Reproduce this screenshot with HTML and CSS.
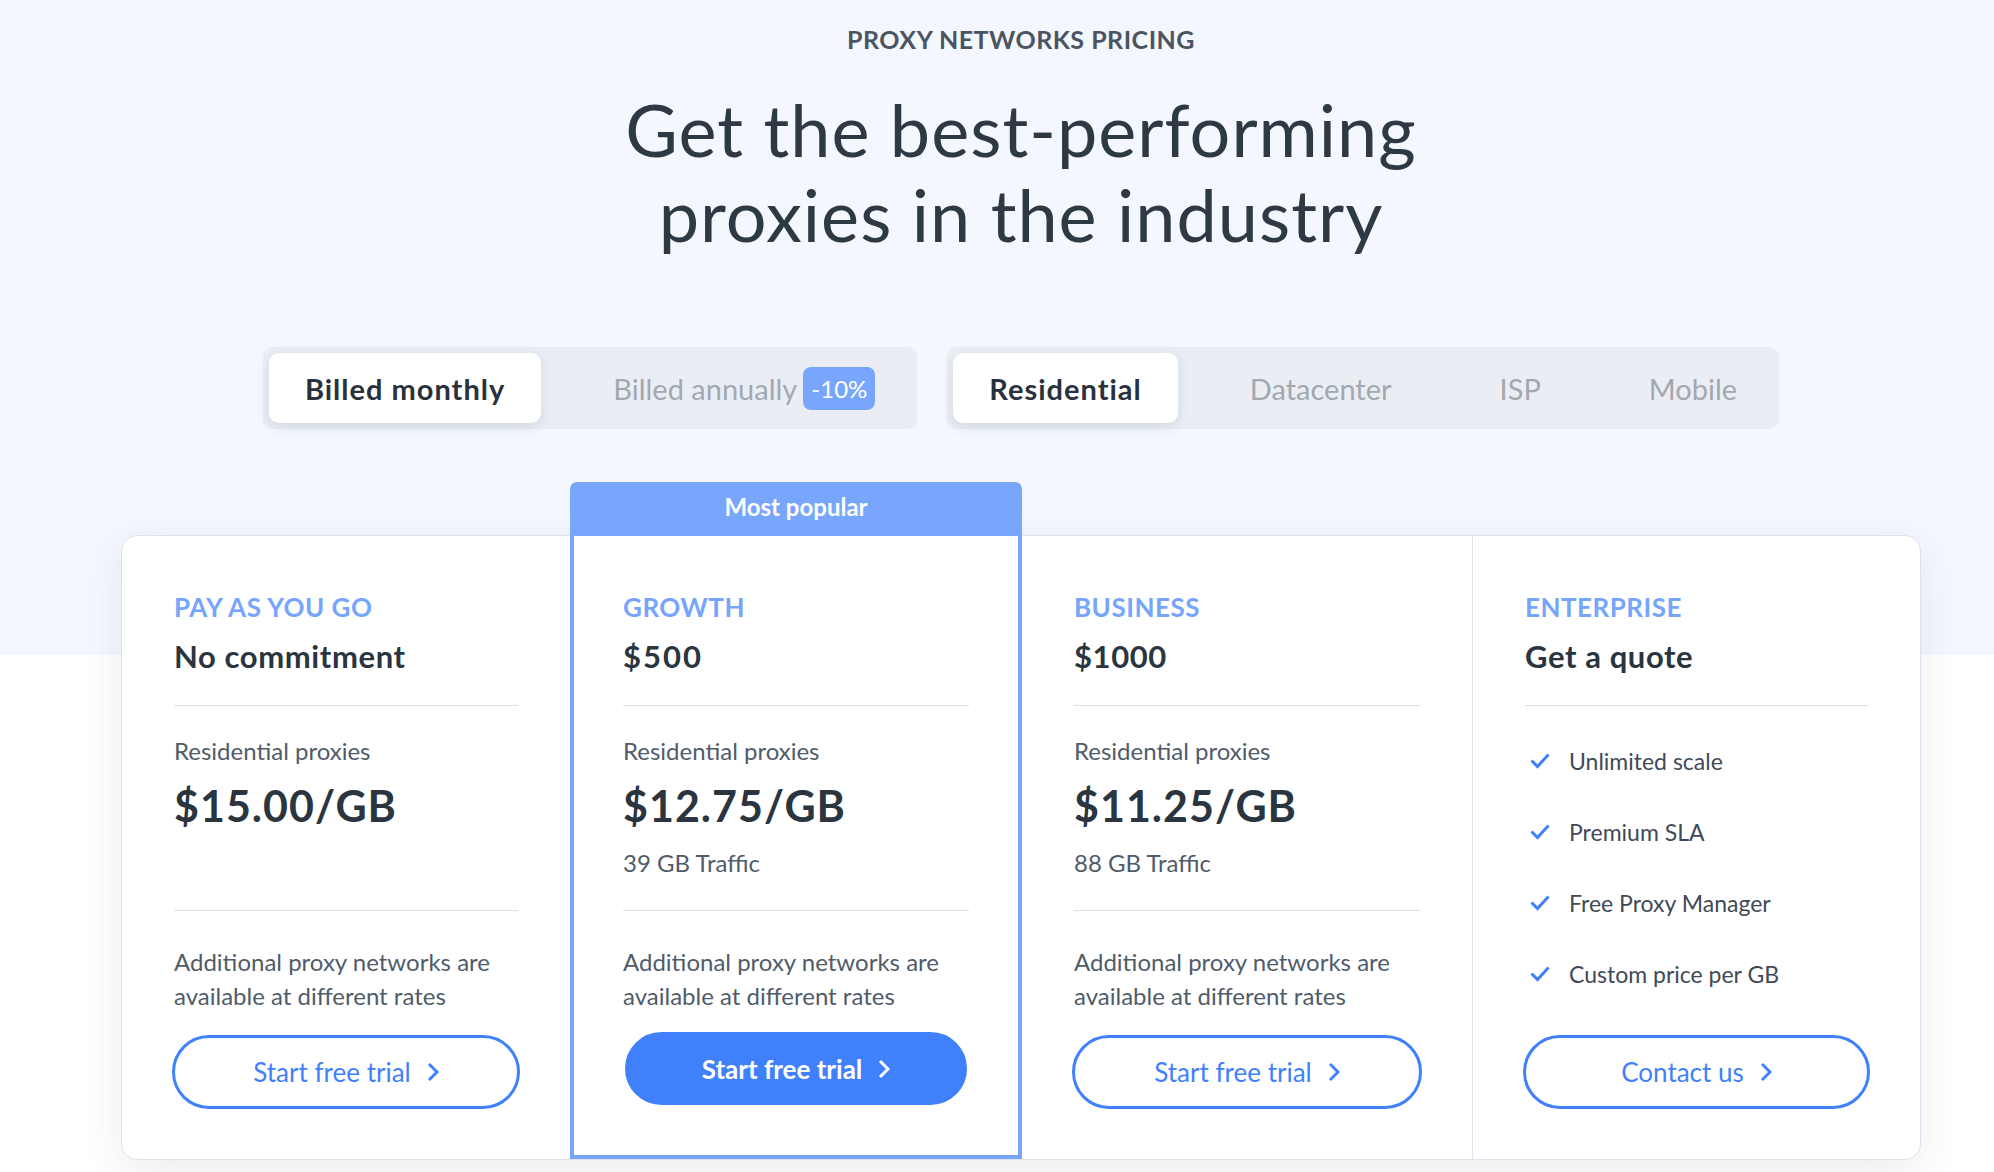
FILE: index.html
```html
<!DOCTYPE html>
<html lang="en">
<head>
    <meta charset="UTF-8">
    <meta name="viewport" content="width=device-width, initial-scale=1.0">
    <title>Proxy Networks Pricing</title>
    <link rel="stylesheet" href="styles.css">
</head>
<body>
    <div class="page">
        <main class="pricing">
            <p class="eyebrow">PROXY NETWORKS PRICING</p>
            <h1>Get the best-performing<br>proxies in the industry</h1>

            <div class="toggles">
                <div class="toggle">
                    <span class="toggle-item active">Billed monthly</span>
                    <span class="toggle-item">Billed annually <span class="badge">-10%</span></span>
                </div>
                <div class="toggle">
                    <span class="toggle-item active">Residential</span>
                    <span class="toggle-item">Datacenter</span>
                    <span class="toggle-item">ISP</span>
                    <span class="toggle-item">Mobile</span>
                </div>
            </div>

            <div class="plans">
                <div class="plan">
                    <h3 class="plan-name">PAY AS YOU GO</h3>
                    <p class="plan-title">No commitment</p>
                    <div class="rate">
                        <p class="rate-label">Residential proxies</p>
                        <p class="rate-price">$15.00/GB</p>
                    </div>
                    <p class="note">Additional proxy networks are available at different rates</p>
                    <a class="btn" href="#">Start free trial
                        <svg width="12" height="20" viewBox="0 0 12 20"><path d="M2 2l8 8-8 8" fill="none" stroke="currentColor" stroke-width="3"/></svg>
                    </a>
                </div>

                <div class="plan popular">
                    <div class="popular-tab">Most popular</div>
                    <h3 class="plan-name">GROWTH</h3>
                    <p class="plan-title spaced">$500</p>
                    <div class="rate">
                        <p class="rate-label">Residential proxies</p>
                        <p class="rate-price">$12.75/GB</p>
                        <p class="traffic">39 GB Traffic</p>
                    </div>
                    <p class="note">Additional proxy networks are available at different rates</p>
                    <a class="btn btn-filled" href="#">Start free trial
                        <svg width="12" height="20" viewBox="0 0 12 20"><path d="M2 2l8 8-8 8" fill="none" stroke="currentColor" stroke-width="3"/></svg>
                    </a>
                </div>

                <div class="plan">
                    <h3 class="plan-name">BUSINESS</h3>
                    <p class="plan-title">$1000</p>
                    <div class="rate">
                        <p class="rate-label">Residential proxies</p>
                        <p class="rate-price">$11.25/GB</p>
                        <p class="traffic">88 GB Traffic</p>
                    </div>
                    <p class="note">Additional proxy networks are available at different rates</p>
                    <a class="btn" href="#">Start free trial
                        <svg width="12" height="20" viewBox="0 0 12 20"><path d="M2 2l8 8-8 8" fill="none" stroke="currentColor" stroke-width="3"/></svg>
                    </a>
                </div>

                <div class="plan enterprise">
                    <h3 class="plan-name">ENTERPRISE</h3>
                    <p class="plan-title">Get a quote</p>
                    <ul class="features">
                        <li><svg width="20" height="16" viewBox="0 0 20 16"><path d="M1.5 7.5l6 6L18.5 1.5" fill="none" stroke="currentColor" stroke-width="3"/></svg>Unlimited scale</li>
                        <li><svg width="20" height="16" viewBox="0 0 20 16"><path d="M1.5 7.5l6 6L18.5 1.5" fill="none" stroke="currentColor" stroke-width="3"/></svg>Premium SLA</li>
                        <li><svg width="20" height="16" viewBox="0 0 20 16"><path d="M1.5 7.5l6 6L18.5 1.5" fill="none" stroke="currentColor" stroke-width="3"/></svg>Free Proxy Manager</li>
                        <li><svg width="20" height="16" viewBox="0 0 20 16"><path d="M1.5 7.5l6 6L18.5 1.5" fill="none" stroke="currentColor" stroke-width="3"/></svg>Custom price per GB</li>
                    </ul>
                    <a class="btn" href="#">Contact us
                        <svg width="12" height="20" viewBox="0 0 12 20"><path d="M2 2l8 8-8 8" fill="none" stroke="currentColor" stroke-width="3"/></svg>
                    </a>
                </div>
            </div>
        </main>
    </div>
</body>
</html>
```

FILE: styles.css
```css
html, body {
    margin: 0;
    padding: 0;
    background: #fff;
}
body {
    font-family: Lato, "Open Sans", Arial, sans-serif;
    color: #2e3843;
}
.page {
    min-height: 100vh;
    background: linear-gradient(to bottom, #f4f7fe 655px, #fff 655px);
    overflow: hidden;
}
.pricing {
    width: 1800px;
    margin-left: 121px;
    padding-top: 25px;
    text-align: center;
}
.eyebrow {
    margin: 0;
    font-size: 25px;
    line-height: 29px;
    font-weight: 700;
    letter-spacing: 0.5px;
    color: #4b5461;
}
h1 {
    margin: 33px 0 0;
    font-size: 72px;
    line-height: 85px;
    font-weight: 400;
    letter-spacing: 1px;
    color: #2f3944;
}

/* toggles */
.toggles {
    display: flex;
    justify-content: center;
    gap: 30px;
    margin-top: 90px;
}
.toggle {
    display: flex;
    gap: 36px;
    padding: 6px;
    background: #eaeef4;
    border-radius: 10px;
}
.toggle-item {
    display: flex;
    align-items: center;
    height: 70px;
    padding: 0 36px;
    font-size: 29px;
    color: #a2a8b0;
    border-radius: 10px;
    white-space: nowrap;
}
.toggle-item.active {
    background: #fff;
    color: #29323c;
    font-weight: 700;
    letter-spacing: 1px;
    box-shadow: 0 4px 14px rgba(50, 70, 110, 0.13);
}
.badge {
    margin-left: 6px;
    padding: 0 8px;
    height: 43px;
    line-height: 43px;
    background: #78a6fc;
    color: #fff;
    border-radius: 8px;
    font-size: 24px;
}

/* plans */
.plans {
    display: grid;
    grid-template-columns: 448px 452px 450px 1fr;
    margin-top: 106px;
    background: #fff;
    border: 1px solid #dce3ec;
    border-radius: 16px;
    box-shadow: 0 12px 40px rgba(40, 55, 80, 0.09);
    text-align: left;
}
.plan {
    display: flex;
    flex-direction: column;
    padding: 56px 52px 50px;
}
.plan.popular {
    position: relative;
    padding: 56px 49px 49px;
    border: 4px solid #78a6fc;
    border-top: 0;
}
.popular-tab {
    position: absolute;
    left: -4px;
    right: -4px;
    top: -54px;
    height: 54px;
    line-height: 50px;
    background: #78a6fc;
    color: #fff;
    font-size: 24px;
    font-weight: 700;
    text-align: center;
    border-radius: 7px 7px 0 0;
}
.plan.enterprise {
    border-left: 1px solid #dce3ec;
    padding-left: 52px;
}
.plan-name {
    margin: 0;
    font-size: 26px;
    line-height: 30px;
    font-weight: 700;
    letter-spacing: 0.5px;
    color: #76a5fc;
}
.plan-title {
    margin: 16px 0 0;
    padding-bottom: 31px;
    font-size: 31px;
    line-height: 36px;
    font-weight: 700;
    letter-spacing: 0.6px;
    color: #2b3540;
    border-bottom: 1px solid #d7dee8;
}
.plan-title.spaced {
    letter-spacing: 2px;
}
.rate {
    height: 205px;
    box-sizing: border-box;
    padding-top: 31px;
    border-bottom: 1px solid #d7dee8;
}
.rate-label, .traffic, .note {
    margin: 0;
    font-size: 24px;
    line-height: 28px;
    color: #505c6a;
}
.rate-price {
    margin: 16px 0 0;
    font-size: 43px;
    line-height: 50px;
    font-weight: 700;
    letter-spacing: 1px;
    color: #2b3540;
}
.traffic {
    margin-top: 18px;
}
.note {
    margin-top: 34px;
    margin-bottom: 19px;
    line-height: 34px;
}
.features {
    list-style: none;
    margin: 41px 0 0;
    padding: 0;
}
.features li {
    display: flex;
    align-items: center;
    height: 28px;
    margin-bottom: 43px;
    font-size: 23px;
    color: #3f4a57;
}
.features svg {
    margin: 0 19px 0 5px;
    color: #4081fb;
}

/* buttons */
.btn {
    display: flex;
    align-items: center;
    justify-content: center;
    gap: 16px;
    height: 74px;
    margin: auto -2px 0;
    box-sizing: border-box;
    border: 3px solid #4081fb;
    border-radius: 40px;
    color: #4081fb;
    font-size: 26px;
    font-weight: 400;
    text-decoration: none;
}
.btn-filled {
    background: #4081fb;
    color: #fff;
    height: 73px;
    margin-left: 2px;
    margin-right: 2px;
    margin-bottom: 1px;
    font-weight: 700;
}
```
